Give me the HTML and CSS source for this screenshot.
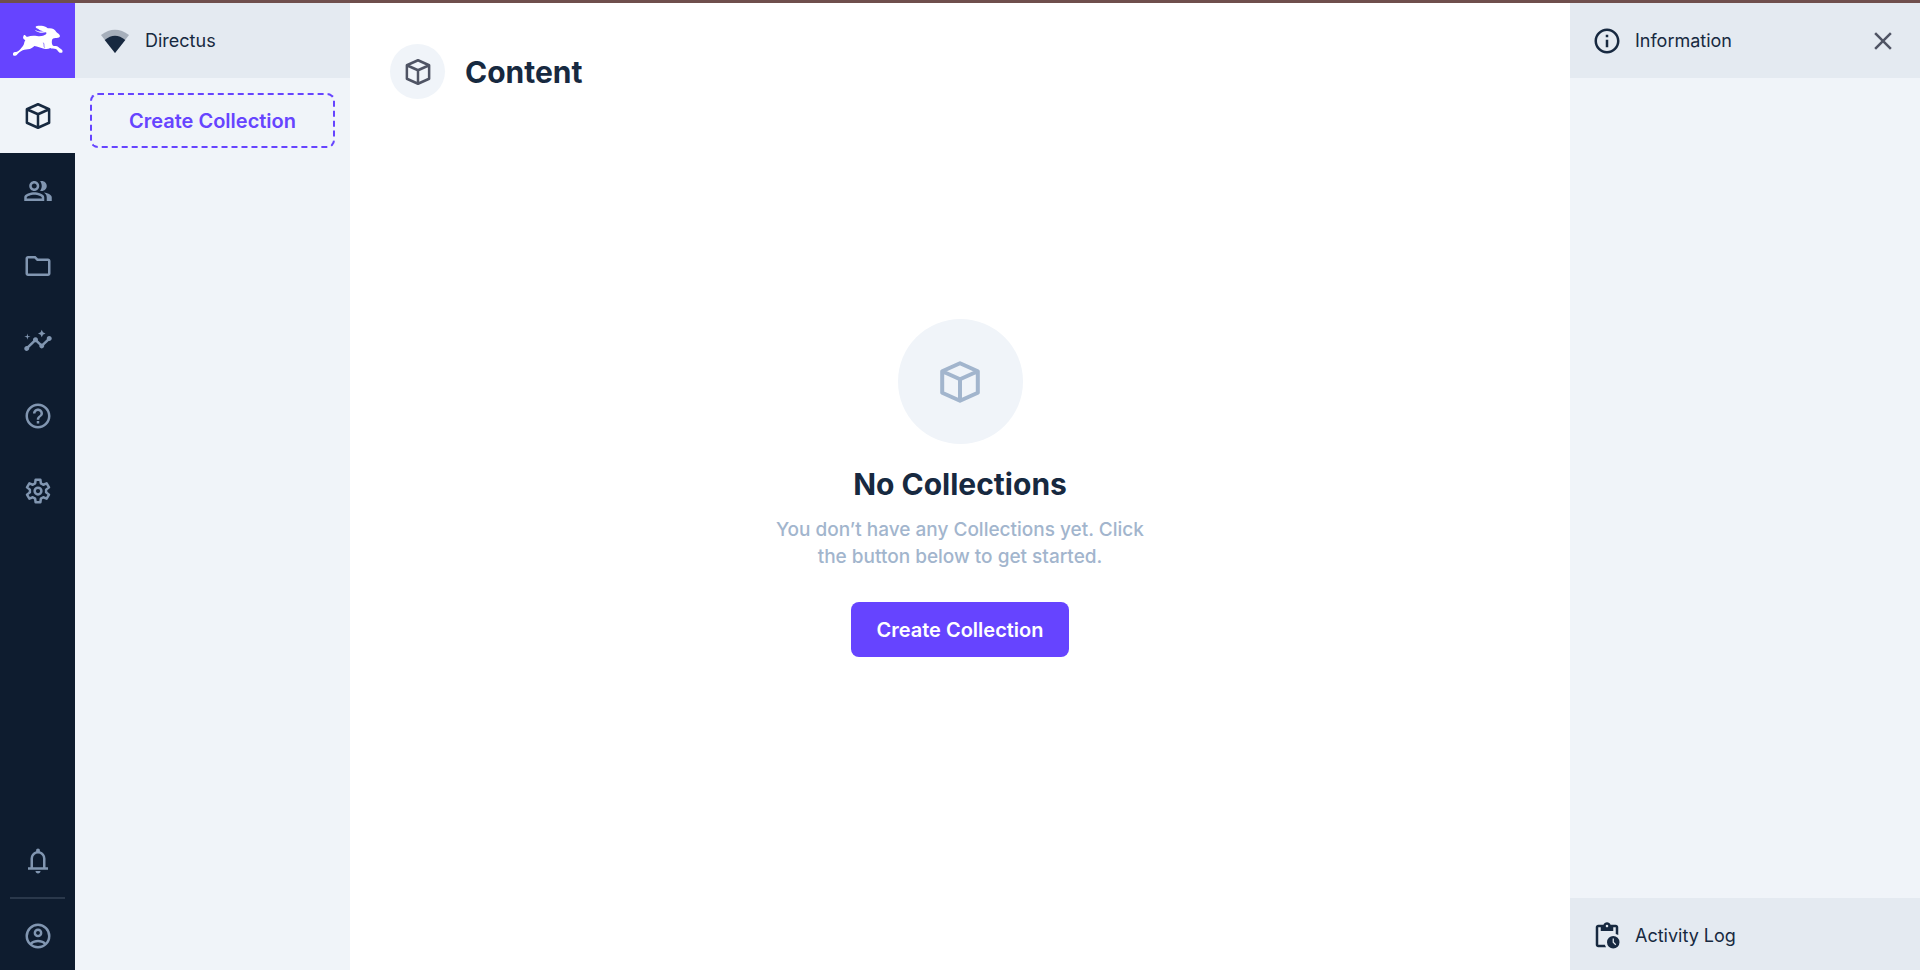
FILE: index.html
```html
<!DOCTYPE html>
<html lang="en">
<head>
<meta charset="utf-8">
<title>Content · Directus</title>
<link rel="stylesheet" href="styles.css">
</head>
<body>
<svg class="sprite" aria-hidden="true">
  <symbol id="box" viewBox="0 0 24 24"><path fill="none" stroke="currentColor" stroke-width="2" stroke-linejoin="round" d="M12 2.600 20.900 6.600V17.400L12 21.400 3.100 17.400V6.600ZM3.100 6.600 12 10.600 20.900 6.600M12 10.600V21.400"/></symbol>
</svg>
<div class="app">
  <nav class="modules" aria-label="Modules">
    <a class="module logo" href="#" aria-label="Home">
      <svg class="rabbit" viewBox="0 0 225 225" aria-hidden="true"><path fill="#fff" d="M39 156c-1-5 2-9 6-9 4-1 8-1 11-4 7-6 12-12 16-20 1-5 2-8 4-12-6-1-8-6-6-11 1-4 5-5 7-2 1 3 3 4 6 3 8-3 18-3 28-2 10 2 20 0 27-5 2-3 2-5-1-6-12 3-25 1-33-8 8 5 18 6 29 5-8-1-15-4-19-8-4-1-7-3-7-6 2-4 23-4 31 1 3 2 5 4 8 4 12-1 19 4 23 11 4 4 10 7 11 12 0 3-5 6-10 6-8-1-13 1-14 6-1 7-1 12 3 17 4 1 12 0 16 4 4 5 10 6 12 10 1 4 1 7-2 7h-6c-4-2-6-7-11-11-7-1-13 0-17-3-5 3-12 4-19 2-10-2-19-6-29-8-4 4-9 8-14 9-8 2-14 0-21 4-7 4-13 8-17 13-3 4-9 5-12 1z"/><path fill="none" stroke="#64f" stroke-width="2" d="M130 119c4 6 0 10 4 15"/></svg>
    </a>
    <a class="module active" href="#" aria-label="Content"><svg class="icon"><use href="#box"/></svg></a>
    <a class="module" href="#" aria-label="Users"><svg class="icon" viewBox="0 0 24 24"><path d="M16.67 13.13C18.04 14.06 19 15.32 19 17v3h4v-3c0-2.18-3.57-3.47-6.33-3.87zM15 12c2.21 0 4-1.79 4-4s-1.79-4-4-4c-.47 0-.91.1-1.33.24C14.5 5.27 15 6.58 15 8s-.5 2.73-1.33 3.76c.42.14.86.24 1.33.24zM9 12c2.21 0 4-1.79 4-4s-1.79-4-4-4-4 1.79-4 4 1.79 4 4 4zm0-6c1.1 0 2 .9 2 2s-.9 2-2 2-2-.9-2-2 .9-2 2-2zM9 13c-2.67 0-8 1.34-8 4v3h16v-3c0-2.66-5.33-4-8-4zm6 5H3v-.99C3.2 16.29 6.3 15 9 15s5.8 1.29 6 2v1z"/></svg></a>
    <a class="module" href="#" aria-label="Files"><svg class="icon" viewBox="0 0 24 24"><path d="M9.17 6l2 2H20v10H4V6h5.17M10 4H4c-1.1 0-1.99.9-1.99 2L2 18c0 1.1.9 2 2 2h16c1.1 0 2-.9 2-2V8c0-1.1-.9-2-2-2h-8l-2-2z"/></svg></a>
    <a class="module" href="#" aria-label="Insights"><svg class="icon" viewBox="0 0 24 24"><path d="M21 8c-1.45 0-2.26 1.44-1.93 2.51l-3.55 3.56c-.3-.09-.74-.09-1.04 0l-2.55-2.55C12.27 10.45 11.46 9 10 9c-1.45 0-2.27 1.44-1.93 2.52l-4.56 4.55C2.44 15.74 1 16.55 1 18c0 1.1.9 2 2 2 1.45 0 2.26-1.44 1.93-2.51l4.55-4.56c.3.09.74.09 1.04 0l2.55 2.55C12.73 16.55 13.54 18 15 18c1.45 0 2.27-1.44 1.93-2.52l3.56-3.55c1.07.33 2.51-.48 2.51-1.93 0-1.1-.9-2-2-2zM15 9l.94-2.07L18 6l-2.06-.93L15 3l-.92 2.07L12 6l2.08.93zM3.5 11L4 9l2-.5L4 8l-.5-2L3 8l-2 .5L3 9z"/></svg></a>
    <a class="module" href="#" aria-label="Documentation"><svg class="icon" viewBox="0 0 24 24"><path d="M11 18h2v-2h-2v2zm1-16C6.48 2 2 6.48 2 12s4.48 10 10 10 10-4.48 10-10S17.52 2 12 2zm0 18c-4.41 0-8-3.59-8-8s3.59-8 8-8 8 3.59 8 8-3.59 8-8 8zm0-14c-2.21 0-4 1.79-4 4h2c0-1.1.9-2 2-2s2 .9 2 2c0 2-3 1.75-3 5h2c0-2.25 3-2.5 3-5 0-2.21-1.79-4-4-4z"/></svg></a>
    <a class="module" href="#" aria-label="Settings"><svg class="icon" viewBox="0 0 24 24"><g fill="none" stroke="currentColor" stroke-width="2"><path stroke-linejoin="round" d="M10.1 3h3.8l.4 2.9 1.9 1.1 2.7-1.1 1.9 3.2-2.3 1.8v2.2l2.3 1.8-1.9 3.2-2.7-1.1-1.9 1.1-.4 2.9h-3.8l-.4-2.9L7.800 17l-2.700 1.100-1.900-3.200 2.300-1.800v-2.200L3.200 9.100l1.900-3.200L7.800 7l1.900-1.100z"/><circle cx="12" cy="12" r="2.700"/></g></svg></a>
    <button class="module bell" type="button" aria-label="Notifications"><svg class="icon" viewBox="0 0 24 24"><path d="M4 19v-2h2v-7q0-2.075 1.250-3.687T10.500 4.200v-.7q0-.625.438-1.062T12 2t1.063.438T13.500 3.500v.7q2 .5 3.250 2.113T18 10v7h2v2zm8 3q-.825 0-1.412-.587T10 20h4q0 .825-.587 1.413T12 22m-4-5h8v-7q0-1.650-1.175-2.825T12 6T9.175 7.175T8 10z"/></svg></button>
    <a class="module account" href="#" aria-label="Account"><svg class="icon" viewBox="0 0 24 24"><path d="M5.850 17.100q1.275-.975 2.850-1.537T12 15t3.300.563t2.850 1.537q.875-1.025 1.363-2.325T20 12q0-3.325-2.337-5.663T12 4T6.337 6.338T4 12q0 1.475.488 2.775T5.850 17.100M12 13q-1.475 0-2.488-1.012T8.500 9.500t1.013-2.488T12 6t2.488 1.013T15.500 9.500t-1.012 2.488T12 13m0 9q-2.075 0-3.900-.788t-3.175-2.137T2.788 15.900T2 12t.788-3.900t2.137-3.175T8.100 2.788T12 2t3.900.788t3.175 2.137T21.213 8.100T22 12t-.788 3.900t-2.137 3.175t-3.175 2.138T12 22m0-2q1.325 0 2.500-.387t2.150-1.113q-.975-.725-2.150-1.112T12 17t-2.500.388T7.350 18.500q.975.725 2.150 1.113T12 20m0-9q.650 0 1.075-.425T13.500 9.500t-.425-1.075T12 8t-1.075.425T10.500 9.500t.425 1.075T12 11"/></svg></a>
  </nav>

  <section class="navigation" aria-label="Collections">
    <div class="bar project">
      <svg class="icon" viewBox="0 0 30 30" aria-hidden="true"><path opacity=".3" d="M15 27 1 9Q15-1.600 29 9Z"/><path d="M15 27 4.700 14Q15 5.400 25.300 14Z"/></svg>
      <span>Directus</span>
    </div>
    <button class="btn outline" type="button">Create Collection</button>
  </section>

  <main class="content">
    <header class="page-header">
      <span class="badge"><svg class="icon" aria-hidden="true"><use href="#box"/></svg></span>
      <h1 class="title">Content</h1>
    </header>
    <section class="empty">
      <span class="disc"><svg class="large-icon" aria-hidden="true"><use href="#box"/></svg></span>
      <h2 class="title">No Collections</h2>
      <p class="hint">You don’t have any Collections yet. Click the button below to get started.</p>
      <button class="btn primary" type="button">Create Collection</button>
    </section>
  </main>

  <aside class="sidebar">
    <div class="bar">
      <svg class="icon" viewBox="0 0 24 24" aria-hidden="true"><path d="M11 7h2v2h-2zm0 4h2v6h-2zm1-9C6.480 2 2 6.480 2 12s4.480 10 10 10 10-4.480 10-10S17.520 2 12 2zm0 18c-4.410 0-8-3.590-8-8s3.590-8 8-8 8 3.590 8 8-3.590 8-8 8z"/></svg>
      <span>Information</span>
      <button class="close" type="button" aria-label="Close"><svg class="icon" viewBox="0 0 24 24"><path d="M19 6.410 17.590 5 12 10.590 6.410 5 5 6.410 10.590 12 5 17.590 6.410 19 12 13.410 17.590 19 19 17.590 13.410 12z"/></svg></button>
    </div>
    <a class="bar activity" href="#">
      <svg class="icon" viewBox="0 0 24 24" aria-hidden="true"><path d="M17 22q-2.075 0-3.537-1.463T12 17t1.463-3.537T17 12t3.538 1.463T22 17t-1.463 3.538T17 22m1.675-2.625l.7-.7L17.500 16.800V14h-1v3.200zM5 21q-.825 0-1.412-.587T3 19V5q0-.825.588-1.412T5 3h4.175q.275-.875 1.075-1.437T12 1q1 0 1.788.563T14.850 3H19q.825 0 1.413.588T21 5v6.250q-.450-.325-.950-.550T19 10.300V5h-2v3H7V5H5v14h5.300q.175.550.4 1.050t.550.950zm7-16q.425 0 .713-.288T13 4t-.288-.712T12 3t-.712.288T11 4t.288.713T12 5"/></svg>
      <span>Activity Log</span>
    </a>
  </aside>
</div>
</body>
</html>
```

FILE: styles.css
```css
* { box-sizing: border-box; }

body {
  margin: 0;
  height: 100vh;
  overflow: hidden;
  border-top: 3px solid #6f4f4d;
  background: #fff;
  color: #172940;
  font-family: Inter, "Open Sans", sans-serif;
  font-size: 18px;
}

a { color: inherit; text-decoration: none; }

button {
  margin: 0;
  padding: 0;
  border: 0;
  background: none;
  color: inherit;
  font: inherit;
  cursor: pointer;
}

.sprite { position: absolute; width: 0; height: 0; }

.icon { display: block; flex: none; width: 30px; height: 30px; fill: currentColor; }

.app { display: flex; height: 100vh; }

.modules {
  display: flex;
  flex: none;
  flex-direction: column;
  width: 75px;
  background: #0e1c2f;
  color: #8196b1;
}

.module {
  display: flex;
  flex: none;
  align-items: center;
  justify-content: center;
  height: 75px;
}

.logo { background: #64f; }
.rabbit { width: 75px; height: 75px; }
.active { background: #f0f4f9; color: #172940; }
.bell { margin-top: auto; }

.account::before {
  content: "";
  position: absolute;
  width: 55px;
  height: 2px;
  margin-bottom: 75px;
  background: #2a384b;
}

.navigation {
  display: flex;
  flex: none;
  flex-direction: column;
  width: 275px;
  background: #f0f4f9;
}

.bar {
  display: flex;
  flex: none;
  align-items: center;
  gap: 12px;
  height: 75px;
  padding: 0 22px;
  background: #e4eaf1;
}

.sidebar .bar { gap: 13px; }

.project { gap: 15px; padding: 0 25px; }

.btn {
  height: 55px;
  border-radius: 8px;
  font-size: 20px;
  font-weight: 600;
}

.outline { margin: 15px; border: 2px dashed #64f; color: #64f; }

.content {
  display: flex;
  flex: 1;
  flex-direction: column;
  min-width: 0;
}

.page-header {
  display: flex;
  align-items: center;
  gap: 20px;
  padding: 41px 40px 15px;
}

.badge,
.disc {
  display: flex;
  align-items: center;
  justify-content: center;
  border-radius: 50%;
  background: #f0f4f9;
}

.badge { width: 55px; height: 55px; color: #4f5464; }

.title { margin: 0; font-size: 30px; font-weight: 700; line-height: 40px; }

.empty {
  display: flex;
  flex: 1;
  flex-direction: column;
  align-items: center;
  justify-content: center;
  padding-bottom: 111px;
  text-align: center;
}

.disc { width: 125px; height: 125px; margin-bottom: 20px; color: #a2b5cd; }
.large-icon { width: 48px; height: 48px; }

.hint {
  max-width: 400px;
  margin: 12px 0 32px;
  color: #a2b5cd;
  font-size: 19px;
  font-weight: 500;
  line-height: 27px;
}

.primary { padding: 0 25px; background: #64f; color: #fff; }

.sidebar {
  display: flex;
  flex: none;
  flex-direction: column;
  justify-content: space-between;
  width: 350px;
  background: #f0f4f9;
}

.close { margin-left: auto; color: #4f5464; }
```
